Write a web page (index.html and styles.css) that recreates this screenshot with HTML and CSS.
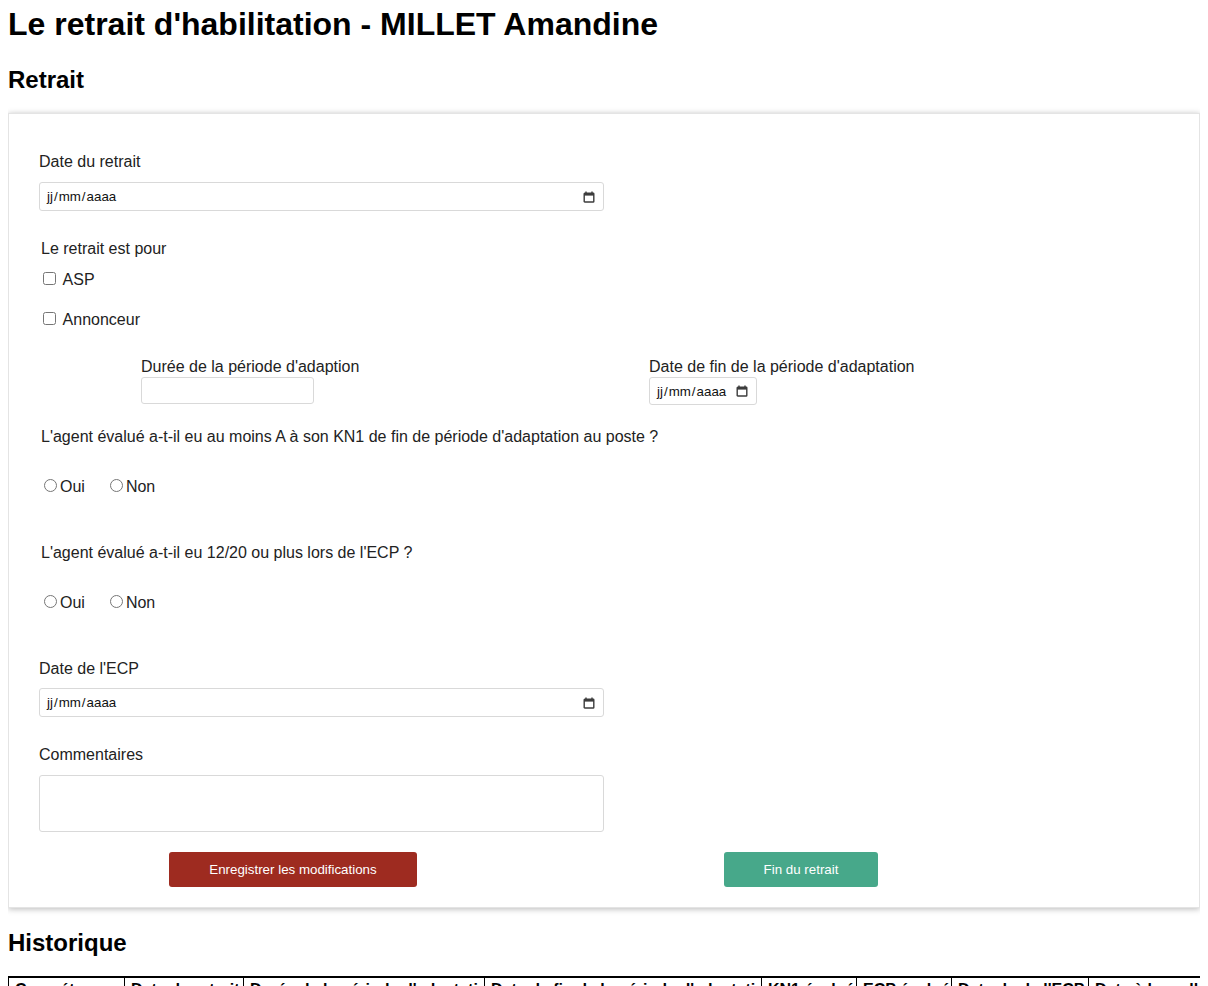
FILE: index.html
```html
<!DOCTYPE html>
<html lang="fr">
<head>
<meta charset="utf-8">
<title>Le retrait d'habilitation</title>
<link rel="stylesheet" href="styles.css">
</head>
<body>
<h1 class="page-title">Le retrait d'habilitation - MILLET Amandine</h1>
<h2 class="section-title">Retrait</h2>

<div class="card">
  <div class="field">
    <div class="label">Date du retrait</div>
    <div class="date-input wide">
      <span class="date-text"><span class="seg">jj</span>/<span class="seg">mm</span>/<span class="seg">aaaa</span></span>
      <svg class="cal" width="12" height="12" viewBox="0 0 12 12"><path d="M3 0.5v2M9 0.5v2" stroke="#3c3c3c" stroke-width="1.4" fill="none"/><rect x="1.2" y="2.2" width="9.6" height="8.8" stroke="#3c3c3c" stroke-width="1.4" fill="none" rx="0.6"/><rect x="1" y="2" width="10" height="2.6" fill="#3c3c3c"/></svg>
    </div>
  </div>

  <div class="group-title">Le retrait est pour</div>
  <div class="check-row first"><input type="checkbox"> ASP</div>
  <div class="check-row"><input type="checkbox"> Annonceur</div>

  <div class="two-cols">
    <div class="col">
      <div class="label">Durée de la période d'adaption</div>
      <div class="text-input"></div>
    </div>
    <div class="col">
      <div class="label">Date de fin de la période d'adaptation</div>
      <div class="date-input small">
        <span class="date-text"><span class="seg">jj</span>/<span class="seg">mm</span>/<span class="seg">aaaa</span></span>
        <svg class="cal" width="12" height="12" viewBox="0 0 12 12"><path d="M3 0.5v2M9 0.5v2" stroke="#3c3c3c" stroke-width="1.4" fill="none"/><rect x="1.2" y="2.2" width="9.6" height="8.8" stroke="#3c3c3c" stroke-width="1.4" fill="none" rx="0.6"/><rect x="1" y="2" width="10" height="2.6" fill="#3c3c3c"/></svg>
      </div>
    </div>
  </div>

  <div class="question q1">L'agent évalué a-t-il eu au moins A à son KN1 de fin de période d'adaptation au poste ?</div>
  <div class="radio-row"><label class="radio"><input type="radio" name="kn1">Oui</label><label class="radio"><input type="radio" name="kn1">Non</label></div>

  <div class="question q2">L'agent évalué a-t-il eu 12/20 ou plus lors de l'ECP ?</div>
  <div class="radio-row"><label class="radio"><input type="radio" name="ecp">Oui</label><label class="radio"><input type="radio" name="ecp">Non</label></div>

  <div class="field ecp">
    <div class="label">Date de l'ECP</div>
    <div class="date-input wide">
      <span class="date-text"><span class="seg">jj</span>/<span class="seg">mm</span>/<span class="seg">aaaa</span></span>
      <svg class="cal" width="12" height="12" viewBox="0 0 12 12"><path d="M3 0.5v2M9 0.5v2" stroke="#3c3c3c" stroke-width="1.4" fill="none"/><rect x="1.2" y="2.2" width="9.6" height="8.8" stroke="#3c3c3c" stroke-width="1.4" fill="none" rx="0.6"/><rect x="1" y="2" width="10" height="2.6" fill="#3c3c3c"/></svg>
    </div>
  </div>

  <div class="field comments">
    <div class="label">Commentaires</div>
    <div class="textarea"></div>
  </div>

  <div class="buttons">
    <button class="btn btn-save">Enregistrer les modifications</button>
    <button class="btn btn-end">Fin du retrait</button>
  </div>
</div>

<h2 class="section-title history">Historique</h2>
<table class="history-table">
  <colgroup>
    <col class="c1"><col class="c2"><col class="c3"><col class="c4"><col class="c5"><col class="c6"><col class="c7"><col class="c8">
  </colgroup>
  <thead>
    <tr>
      <th>Compétence</th>
      <th>Date du retrait</th>
      <th>Durée de la période d'adaptation</th>
      <th>Date de fin de la période d'adaptation</th>
      <th>KN1 évalué</th>
      <th>ECP évalué</th>
      <th>Date de de l'ECP</th>
      <th>Date à laquelle le retrait</th>
    </tr>
  </thead>
</table>
</body>
</html>
```

FILE: styles.css
```css
html {
  overflow: hidden;
}
body {
  margin: 8px;
  font-family: "Liberation Sans", Arial, sans-serif;
  color: #000;
  background: #fff;
}
.page-title {
  font-size: 32px;
  line-height: 33px;
  font-weight: bold;
  margin: 0 0 25px;
}
.section-title {
  font-size: 24px;
  line-height: 28px;
  font-weight: bold;
  margin: 0 0 19px;
}
.section-title.history {
  margin-top: 21px;
}
.card {
  border: 1px solid #e4e4e4;
  box-shadow: 0 1px 6px rgba(0, 0, 0, 0.28);
  padding: 38px 30px 20px;
  font-size: 16px;
  color: #222;
}
.label,
.group-title,
.question,
.check-row,
.radio-row {
  line-height: 20px;
  height: 20px;
}
.label {
  margin-bottom: 10px;
}
.date-input,
.text-input,
.textarea {
  box-sizing: border-box;
  border: 1px solid #d9d9d9;
  border-radius: 3px;
  background: #fff;
}
.date-input {
  display: flex;
  align-items: center;
  justify-content: space-between;
  font-size: 13.333px;
  color: #111;
}
.date-input.wide {
  width: 565px;
  height: 29px;
  padding: 0 8px 0 6px;
}
.date-input.small {
  width: 108px;
  height: 28px;
  padding: 0 8px 0 6px;
}
.seg {
  padding: 0 1px;
}
.cal {
  display: block;
}
.group-title {
  margin-top: 28px;
  padding-left: 2px;
}
.check-row {
  margin-top: 20px;
}
.check-row.first {
  margin-top: 10px;
}
.check-row input {
  margin: 3px 3px 3px 4px;
}
.two-cols {
  display: grid;
  grid-template-columns: 508px 508px;
  padding-left: 102px;
  margin-top: 28px;
  height: 48px;
}
.two-cols .label {
  margin-bottom: 0;
}
.text-input {
  width: 173px;
  height: 27px;
}
.question {
  padding-left: 2px;
}
.question.q1 {
  margin-top: 22px;
}
.question.q2 {
  margin-top: 47px;
}
.radio-row {
  margin-top: 29px;
}
.radio {
  margin-right: 20px;
}
.radio input {
  margin: 3px 3px 0 5px;
}
.field.ecp {
  margin-top: 47px;
}
.field.ecp .label {
  margin-bottom: 9px;
}
.field.comments {
  margin-top: 28px;
}
.textarea {
  width: 565px;
  height: 57px;
}
.buttons {
  display: grid;
  grid-template-columns: 508px 508px;
  justify-items: center;
  margin-top: 20px;
}
.btn {
  height: 35px;
  padding: 0 40px;
  border: none;
  border-radius: 3px;
  color: #fff;
  font-family: "Liberation Sans", Arial, sans-serif;
  font-size: 13.333px;
}
.btn-save {
  background: #9e2b20;
}
.btn-end {
  background: #47a88a;
}
.history-table {
  border-collapse: collapse;
  table-layout: fixed;
  width: 1300px;
  border-top: 2px solid #000;
}
.history-table th {
  border: 1px solid #000;
  border-top: 2px solid #000;
  padding: 3px 6px;
  font-size: 16px;
  font-weight: bold;
  text-align: left;
  white-space: nowrap;
  overflow: hidden;
}
.c1 { width: 116px; }
.c2 { width: 119px; }
.c3 { width: 241px; }
.c4 { width: 277px; }
.c5 { width: 95px; }
.c6 { width: 95px; }
.c7 { width: 137px; }
.c8 { width: 220px; }
```
